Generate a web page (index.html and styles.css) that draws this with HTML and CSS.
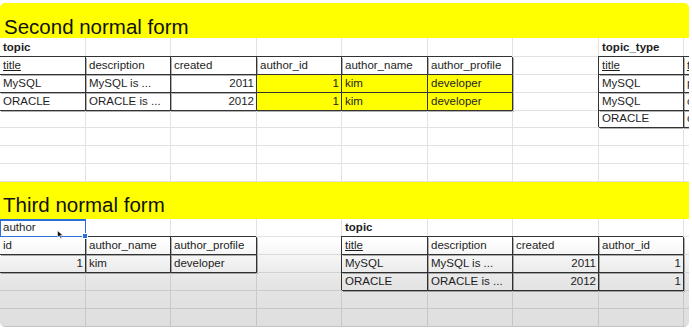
FILE: index.html
```html
<!DOCTYPE html>
<html lang="en">
<head>
<meta charset="utf-8">
<title>Normal forms</title>
<link rel="stylesheet" href="styles.css">
</head>
<body>
<div class="sheet">
  <div class="band band-one">Second normal form</div>

  <div class="c b">topic</div><div class="c"></div><div class="c"></div><div class="c"></div><div class="c"></div><div class="c"></div><div class="c"></div><div class="c b">topic_type</div><div class="c"></div>

  <div class="c t u">title</div><div class="c t">description</div><div class="c t">created</div><div class="c t">author_id</div><div class="c t">author_name</div><div class="c t">author_profile</div><div class="c"></div><div class="c t u">title</div><div class="c t u">type</div>

  <div class="c t">MySQL</div><div class="c t">MySQL is ...</div><div class="c t r">2011</div><div class="c t r y">1</div><div class="c t y">kim</div><div class="c t y">developer</div><div class="c"></div><div class="c t">MySQL</div><div class="c t">paid</div>

  <div class="c t">ORACLE</div><div class="c t">ORACLE is ...</div><div class="c t r">2012</div><div class="c t r y">1</div><div class="c t y">kim</div><div class="c t y">developer</div><div class="c"></div><div class="c t">MySQL</div><div class="c t">open source</div>

  <div class="c"></div><div class="c"></div><div class="c"></div><div class="c"></div><div class="c"></div><div class="c"></div><div class="c"></div><div class="c t">ORACLE</div><div class="c t">open source</div>

  <div class="c"></div><div class="c"></div><div class="c"></div><div class="c"></div><div class="c"></div><div class="c"></div><div class="c"></div><div class="c"></div><div class="c"></div>
  <div class="c"></div><div class="c"></div><div class="c"></div><div class="c"></div><div class="c"></div><div class="c"></div><div class="c"></div><div class="c"></div><div class="c"></div>
  <div class="c"></div><div class="c"></div><div class="c"></div><div class="c"></div><div class="c"></div><div class="c"></div><div class="c"></div><div class="c"></div><div class="c"></div>

  <div class="band band-two">Third normal form</div>

  <div class="c selected">author<span class="sel"><span class="handle"></span></span><svg class="cursor" width="7" height="9" viewBox="0 0 7 9"><path d="M0.5 0.5 L0.5 7.5 L2.3 5.8 L3.6 8.5 L4.7 8 L3.5 5.4 L6 5.4 Z" fill="#111" stroke="#fff" stroke-width="0.6"/></svg></div><div class="c"></div><div class="c"></div><div class="c"></div><div class="c b">topic</div><div class="c"></div><div class="c"></div><div class="c"></div><div class="c"></div>

  <div class="c t">id</div><div class="c t">author_name</div><div class="c t">author_profile</div><div class="c"></div><div class="c t u">title</div><div class="c t">description</div><div class="c t">created</div><div class="c t">author_id</div><div class="c"></div>

  <div class="c t r">1</div><div class="c t">kim</div><div class="c t">developer</div><div class="c"></div><div class="c t">MySQL</div><div class="c t">MySQL is ...</div><div class="c t r">2011</div><div class="c t r">1</div><div class="c"></div>

  <div class="c"></div><div class="c"></div><div class="c"></div><div class="c"></div><div class="c t">ORACLE</div><div class="c t">ORACLE is ...</div><div class="c t r">2012</div><div class="c t r">1</div><div class="c"></div>

  <div class="c"></div><div class="c"></div><div class="c"></div><div class="c"></div><div class="c"></div><div class="c"></div><div class="c"></div><div class="c"></div><div class="c"></div>
  <div class="c"></div><div class="c"></div><div class="c"></div><div class="c"></div><div class="c"></div><div class="c"></div><div class="c"></div><div class="c"></div><div class="c"></div>

  <div class="shade"></div>
</div>
</body>
</html>
```

FILE: styles.css
```css
html, body {
  margin: 0;
  padding: 0;
  background: #ffffff;
}

body {
  padding-top: 3px;
  font-family: "Liberation Sans", Arial, sans-serif;
  color: #1e1e1e;
}

.sheet {
  position: relative;
  width: 689px;
  height: 324px;
  border-radius: 5px;
  overflow: hidden;
  background: #ffffff;
  display: grid;
  grid-template-columns: 86px 85px 86px 85px 86px 85px 86px 85px 1fr;
  grid-template-rows: 35px 19px 18px 18px 18px 17px 18px 18px 18px 37px 18px 18px 18px 18px 18px 18px;
}

.band {
  grid-column: 1 / -1;
  background: #ffff00;
  display: flex;
  align-items: flex-end;
  font-size: 20.5px;
  line-height: 24px;
  color: #111;
  padding-left: 3px;
}

.band-one {
  padding-left: 4px;
  padding-bottom: 0;
  line-height: 22px;
}

.band-two {
  padding-bottom: 2px;
}

.c {
  box-sizing: border-box;
  border-right: 1px solid #e2e2e2;
  border-bottom: 1px solid #e2e2e2;
  display: flex;
  align-items: flex-end;
  padding: 0 2px 2px 3px;
  font-size: 11.5px;
  line-height: 13px;
  white-space: nowrap;
  overflow: hidden;
  min-width: 0;
}

.t {
  border-right-color: #333333;
  border-bottom-color: #333333;
  box-shadow: -1px -1px 0 #333333, 1px 1px 0 rgba(60, 60, 60, 0.4);
}

.r {
  justify-content: flex-end;
}

.y {
  background: #ffff00;
}

.b {
  font-weight: bold;
}

.u {
  text-decoration: underline;
}

.selected {
  position: relative;
  overflow: visible;
}

.sel {
  position: absolute;
  left: 0;
  top: 0;
  right: -1px;
  bottom: -1px;
  border: 1px solid #2a6fdb;
  border-top-width: 2px;
}

.handle {
  position: absolute;
  right: -3px;
  bottom: -3px;
  width: 4px;
  height: 4px;
  background: #2a6fdb;
  border: 1px solid #ffffff;
}

.cursor {
  position: absolute;
  left: 57px;
  top: 11px;
}

.shade {
  position: absolute;
  left: 0;
  right: 0;
  bottom: 0;
  height: 88px;
  pointer-events: none;
  background: linear-gradient(to bottom, rgba(0,0,0,0) 0%, rgba(0,0,0,0.1) 50%, rgba(0,0,0,0.13) 100%);
}
```
